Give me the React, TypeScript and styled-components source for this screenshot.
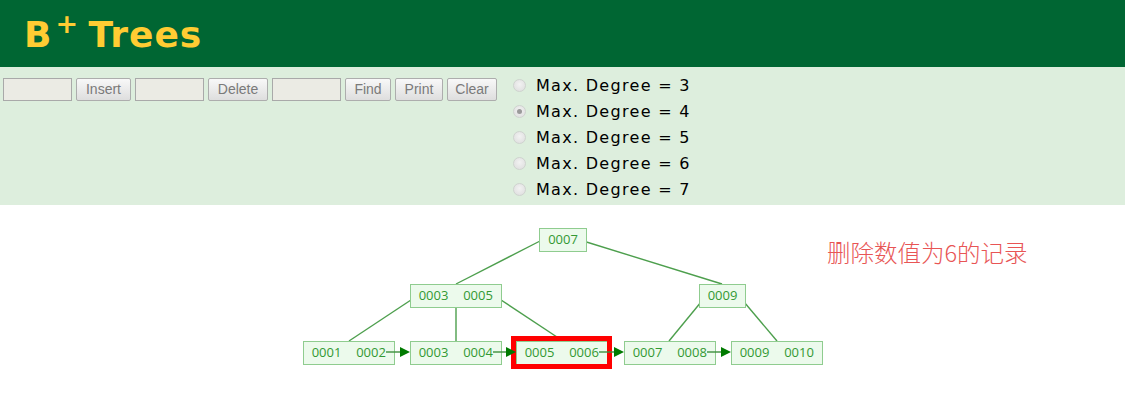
import React from "react";
import styled, { createGlobalStyle } from "styled-components";

const GlobalStyle = createGlobalStyle`
  html, body { margin: 0; padding: 0; background: #ffffff; }
  body { font-family: "DejaVu Sans", Verdana, sans-serif; }
`;

const Page = styled.div`
  width: 1125px;
  height: 401px;
  overflow: hidden;
  background: #ffffff;
`;

const Header = styled.header`
  height: 67px;
  background: #006633;
  display: flex;
  align-items: center;
  padding-left: 24px;
  box-sizing: border-box;
`;

const Title = styled.h1`
  margin: 0;
  font-family: "DejaVu Sans", Verdana, sans-serif;
  font-weight: bold;
  font-size: 36px;
  letter-spacing: 1px;
  word-spacing: -4px;
  color: #ffcc33;
  line-height: 1;
  padding-top: 2px;
  white-space: pre;
  sup {
    font-size: 27px;
    vertical-align: 14px;
    line-height: 0;
    margin: 0 0 0 3px;
  }
`;

const ControlBar = styled.section`
  height: 138px;
  background: #ddeedd;
  display: flex;
  align-items: flex-start;
  padding: 11px 0 0 3px;
  box-sizing: border-box;
`;

const Controls = styled.div`
  display: flex;
  gap: 4px;
`;

const TextField = styled.input`
  width: 69px;
  height: 23px;
  box-sizing: border-box;
  margin: 0;
  background: #ebebe4;
  border: 1px solid #a9a9a9;
  padding: 0 3px;
`;

const Button = styled.button<{ $w: number }>`
  width: ${(p) => p.$w}px;
  height: 23px;
  box-sizing: border-box;
  margin: 0;
  padding: 0;
  text-align: center;
  border: 1px solid #adadad;
  border-radius: 2px;
  background: linear-gradient(#f8f8f8, #dedede);
  color: #7a7a7a;
  font-family: "Liberation Sans", Arial, sans-serif;
  font-size: 14px;
  line-height: 21px;
`;

const RadioGroup = styled.div`
  display: flex;
  flex-direction: column;
  margin-left: 16px;
  margin-top: -6px;
`;

const RadioRow = styled.label`
  display: flex;
  align-items: center;
  height: 26px;
  font-family: "DejaVu Sans", Verdana, sans-serif;
  font-size: 16px;
  letter-spacing: 1.3px;
  color: #000000;
`;

const Radio = styled.input`
  appearance: none;
  width: 13px;
  height: 13px;
  margin: 0 10px 0 0;
  border-radius: 50%;
  border: 1px solid #cfd3cf;
  background: radial-gradient(circle at 50% 40%, #f2f2f2, #dcdcdc);
  box-sizing: border-box;
  display: grid;
  place-items: center;
  &:checked::after {
    content: "";
    width: 5px;
    height: 5px;
    border-radius: 50%;
    background: #9a9a9a;
  }
`;

const Canvas = styled.div`
  position: relative;
  height: 196px;
`;

const TreeSvg = styled.svg`
  display: block;
  font-family: "Open Sans", "Noto Sans", sans-serif;
`;

const Note = styled.div`
  position: absolute;
  left: 827px;
  top: 30px;
  font-family: "Noto Sans CJK SC", sans-serif;
  font-weight: 300;
  font-size: 23.5px;
  color: #e85555;
`;

type Node = { x: number; y: number; w: number; keys: string[] };

const OY = 205;
const H = 23;

const nodes: Node[] = [
  { x: 539, y: 228, w: 47, keys: ["0007"] },
  { x: 410, y: 284, w: 91, keys: ["0003", "0005"] },
  { x: 699, y: 284, w: 46, keys: ["0009"] },
  { x: 303, y: 341, w: 91, keys: ["0001", "0002"] },
  { x: 410, y: 341, w: 91, keys: ["0003", "0004"] },
  { x: 516, y: 341, w: 91, keys: ["0005", "0006"] },
  { x: 624, y: 341, w: 91, keys: ["0007", "0008"] },
  { x: 731, y: 341, w: 91, keys: ["0009", "0010"] },
];

const edges: [number, number, number, number][] = [
  [542, 240, 456, 284],
  [580, 240, 722, 284],
  [417, 296, 349, 341],
  [456, 299, 456, 341],
  [495, 296, 563, 341],
  [706, 296, 669, 341],
  [739, 296, 777, 341],
];

const arrows: [number, number][] = [
  [386, 410],
  [493, 516],
  [599, 624],
  [707, 731],
];

function TreeNode({ n }: { n: Node }) {
  const y = n.y - OY;
  const cy = y + H / 2 + 4.5;
  return (
    <g>
      <rect x={n.x + 0.5} y={y + 0.5} width={n.w} height={H} fill="#ecfaec" stroke="#8fcc8f" strokeWidth={1} />
      {n.keys.length === 1 ? (
        <text x={n.x + n.w / 2 + 0.5} y={cy} textAnchor="middle" fontSize={13} fill="#339933">
          {n.keys[0]}
        </text>
      ) : (
        <>
          <text x={n.x + 23.5} y={cy} textAnchor="middle" fontSize={13} fill="#339933">
            {n.keys[0]}
          </text>
          <text x={n.x + 68} y={cy} textAnchor="middle" fontSize={13} fill="#339933">
            {n.keys[1]}
          </text>
        </>
      )}
    </g>
  );
}

function Tree() {
  return (
    <TreeSvg width={1125} height={196} viewBox="0 0 1125 196">
      {edges.map(([x1, y1, x2, y2], i) => (
        <line key={i} x1={x1} y1={y1 - OY} x2={x2} y2={y2 - OY} stroke="#4d9f4d" strokeWidth={1.4} />
      ))}
      {nodes.map((n, i) => (
        <TreeNode key={i} n={n} />
      ))}
      <rect x={513.5} y={338.5 - OY} width={96} height={28} fill="none" stroke="#ff0000" strokeWidth={5} />
      {arrows.map(([x1, x2], i) => (
        <g key={i}>
          <line x1={x1} y1={352 - OY} x2={x2 - 9} y2={352 - OY} stroke="#3d8f3d" strokeWidth={1.4} />
          <polygon
            points={`${x2 - 10},${347 - OY} ${x2},${352 - OY} ${x2 - 10},${357 - OY}`}
            fill="#007a00"
          />
        </g>
      ))}
    </TreeSvg>
  );
}

const degrees = [3, 4, 5, 6, 7];

export default function App() {
  return (
    <Page>
      <GlobalStyle />
      <Header>
        <Title>
          B<sup>+</sup> Trees
        </Title>
      </Header>
      <ControlBar>
        <Controls>
          <TextField type="text" />
          <Button $w={55}>Insert</Button>
          <TextField type="text" />
          <Button $w={60}>Delete</Button>
          <TextField type="text" />
          <Button $w={46}>Find</Button>
          <Button $w={48}>Print</Button>
          <Button $w={50}>Clear</Button>
        </Controls>
        <RadioGroup>
          {degrees.map((d) => (
            <RadioRow key={d}>
              <Radio type="radio" name="degree" defaultChecked={d === 4} />
              Max. Degree = {d}
            </RadioRow>
          ))}
        </RadioGroup>
      </ControlBar>
      <Canvas>
        <Tree />
        <Note>删除数值为6的记录</Note>
      </Canvas>
    </Page>
  );
}
